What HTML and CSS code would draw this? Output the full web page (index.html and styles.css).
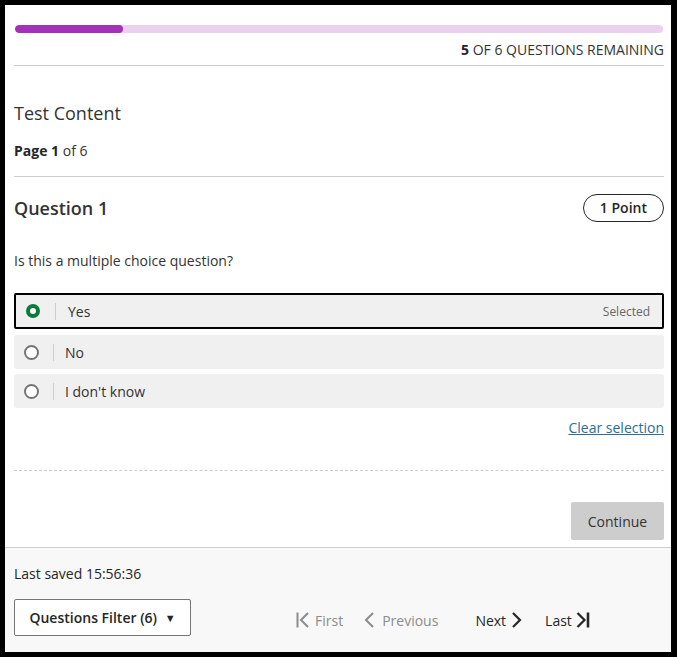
FILE: index.html
```html
<!DOCTYPE html>
<html lang="en">
<head>
<meta charset="utf-8">
<title>Test Content</title>
<link rel="stylesheet" href="styles.css">
</head>
<body>
<div class="frame">
  <main class="main">
    <div class="progress"><div class="progress-fill" style="width:108px"></div></div>
    <div class="remaining"><strong>5</strong> OF 6 QUESTIONS REMAINING</div>

    <h1 class="title">Test Content</h1>
    <div class="page"><strong>Page 1</strong> of 6</div>

    <div class="q-head">
      <h2 class="q-title">Question 1</h2>
      <span class="pill">1 Point</span>
    </div>
    <p class="q-text">Is this a multiple choice question?</p>

    <div class="options">
      <div class="option selected">
        <span class="radio on"></span>
        <span class="sep"></span>
        <span class="opt-label">Yes</span>
        <span class="sel-note">Selected</span>
      </div>
      <div class="option">
        <span class="radio"></span>
        <span class="sep"></span>
        <span class="opt-label">No</span>
      </div>
      <div class="option">
        <span class="radio"></span>
        <span class="sep"></span>
        <span class="opt-label">I don't know</span>
      </div>
    </div>

    <div class="clear-row"><a class="clear" href="#">Clear selection</a></div>

    <div class="actions"><button class="continue" type="button">Continue</button></div>
  </main>

  <footer class="footer">
    <div class="saved">Last saved 15:56:36</div>
    <div class="foot-row">
      <button class="filter" type="button">Questions Filter (6) <span class="caret">&#9660;</span></button>
      <nav class="pager">
        <span class="nav disabled">
          <svg width="14" height="18" viewBox="0 0 14 18"><path d="M1.5 1.5v15" stroke="currentColor" stroke-width="2" fill="none"/><path d="M12 2L5 9l7 7" stroke="currentColor" stroke-width="2" fill="none"/></svg>
          First
        </span>
        <span class="nav disabled">
          <svg width="10" height="18" viewBox="0 0 10 18"><path d="M9 2L2 9l7 7" stroke="currentColor" stroke-width="2" fill="none"/></svg>
          Previous
        </span>
        <span class="nav next">
          Next
          <svg width="10" height="18" viewBox="0 0 10 18"><path d="M1 2l7 7-7 7" stroke="currentColor" stroke-width="2.2" fill="none"/></svg>
        </span>
        <span class="nav last">
          Last
          <svg width="14" height="18" viewBox="0 0 14 18"><path d="M1.5 2l7 7-7 7" stroke="currentColor" stroke-width="2.2" fill="none"/><path d="M12 1.5v15" stroke="currentColor" stroke-width="2.6" fill="none"/></svg>
        </span>
      </nav>
    </div>
  </footer>
</div>
</body>
</html>
```

FILE: styles.css
```css
* { box-sizing: border-box; }
html, body { margin: 0; padding: 0; }
body {
  font-family: "Open Sans", "Liberation Sans", sans-serif;
  color: #262626;
  background: #fff;
  font-size: 14px;
}
.frame {
  width: 677px;
  height: 657px;
  border-style: solid;
  border-color: #000;
  border-width: 5px 6px 5px 5px;
  display: flex;
  flex-direction: column;
  background: #fff;
}
.main {
  padding: 20px 7px 0 9px;
}
.progress {
  height: 8px;
  margin: 0 1px;
  border-radius: 4px;
  background: #ebd0f0;
  overflow: hidden;
}
.progress-fill {
  height: 8px;
  border-radius: 4px;
  background: #a333b6;
}
.remaining {
  margin-top: 7px;
  padding-bottom: 6px;
  line-height: 19px;
  text-align: right;
  color: #333;
  border-bottom: 1px solid #cdcdcd;
}
.remaining strong { font-weight: 700; color: #262626; }
.title {
  margin: 35px 0 0;
  font-size: 18px;
  line-height: 24px;
  font-weight: 400;
  color: #333;
}
.page {
  margin-top: 16px;
  padding-bottom: 16px;
  line-height: 19px;
  color: #333;
  border-bottom: 1px solid #cdcdcd;
}
.page strong { font-weight: 700; color: #262626; }
.q-head {
  margin-top: 17px;
  height: 28px;
  display: flex;
  align-items: center;
  justify-content: space-between;
}
.q-title {
  margin: 0;
  font-size: 18px;
  line-height: 24px;
  font-weight: 600;
  color: #333;
}
.pill {
  height: 28px;
  padding: 0 16px;
  border: 1px solid #262626;
  border-radius: 14px;
  font-weight: 600;
  line-height: 26px;
  color: #262626;
}
.q-text {
  margin: 29px 0 0;
  line-height: 19px;
  color: #333;
}
.options {
  margin-top: 23px;
  display: flex;
  flex-direction: column;
  gap: 6px;
}
.option {
  height: 34px;
  display: flex;
  align-items: center;
  padding: 0 12px 0 10px;
  background: #f0f0f0;
  border-radius: 3px;
  color: #333;
}
.option + .option + .option { margin-top: -1px; }
.option.selected {
  height: 36px;
  border: 2px solid #000;
  border-radius: 2px;
  padding-left: 10px;
}
.radio {
  width: 15px;
  height: 15px;
  border-radius: 50%;
  border: 2px solid #767676;
  background: #fff;
  flex: none;
}
.radio.on {
  width: 14px;
  height: 14px;
  border: 4.5px solid #0a7b3c;
  background: #fff;
}
.sep {
  width: 1px;
  height: 17px;
  background: #cdcdcd;
  margin: 0 11px 0 14px;
  flex: none;
}
.selected .sep { margin-left: 15px; }
.opt-label { line-height: 19px; }
.selected .opt-label { margin-left: 1px; }
.sel-note {
  margin-left: auto;
  font-size: 12px;
  color: #666;
}
.clear-row {
  margin-top: 10px;
  padding-bottom: 33px;
  text-align: right;
  line-height: 19px;
  border-bottom: 1px dashed #cdcdcd;
}
.clear {
  color: #2a6f97;
  text-decoration: underline;
  font-size: 14px;
}
.actions {
  margin-top: 31px;
  padding-bottom: 7px;
  display: flex;
  justify-content: flex-end;
}
.continue {
  width: 93px;
  height: 38px;
  border: none;
  border-radius: 2px;
  background: #cdcdcd;
  color: #333;
  font-family: inherit;
  font-size: 14px;
}
.footer {
  flex: 1;
  background: #f8f8f8;
  border-top: 1px solid #cdcdcd;
  padding: 16px 7px 0 9px;
}
.saved {
  line-height: 19px;
  color: #262626;
}
.foot-row {
  margin-top: 16px;
  display: flex;
  align-items: center;
}
.filter {
  width: 177px;
  height: 37px;
  background: #fff;
  border: 1px solid #767676;
  border-radius: 2px;
  font-family: inherit;
  font-size: 14px;
  font-weight: 600;
  color: #262626;
  padding: 0;
}
.caret {
  font-size: 11px;
  margin-left: 4px;
  position: relative;
  top: -1px;
}
.pager {
  margin-left: 105px;
  padding-top: 5px;
  display: flex;
  align-items: center;
}
.nav {
  display: flex;
  align-items: center;
  gap: 5px;
  font-size: 14px;
  line-height: 19px;
  color: #262626;
}
.nav svg { display: block; }
.nav.disabled { color: #8c8c8c; }
.nav.disabled + .nav.disabled { margin-left: 21px; gap: 8px; }
.nav.next { margin-left: 37px; gap: 6px; }
.nav.last { margin-left: 23px; gap: 4px; }
```
